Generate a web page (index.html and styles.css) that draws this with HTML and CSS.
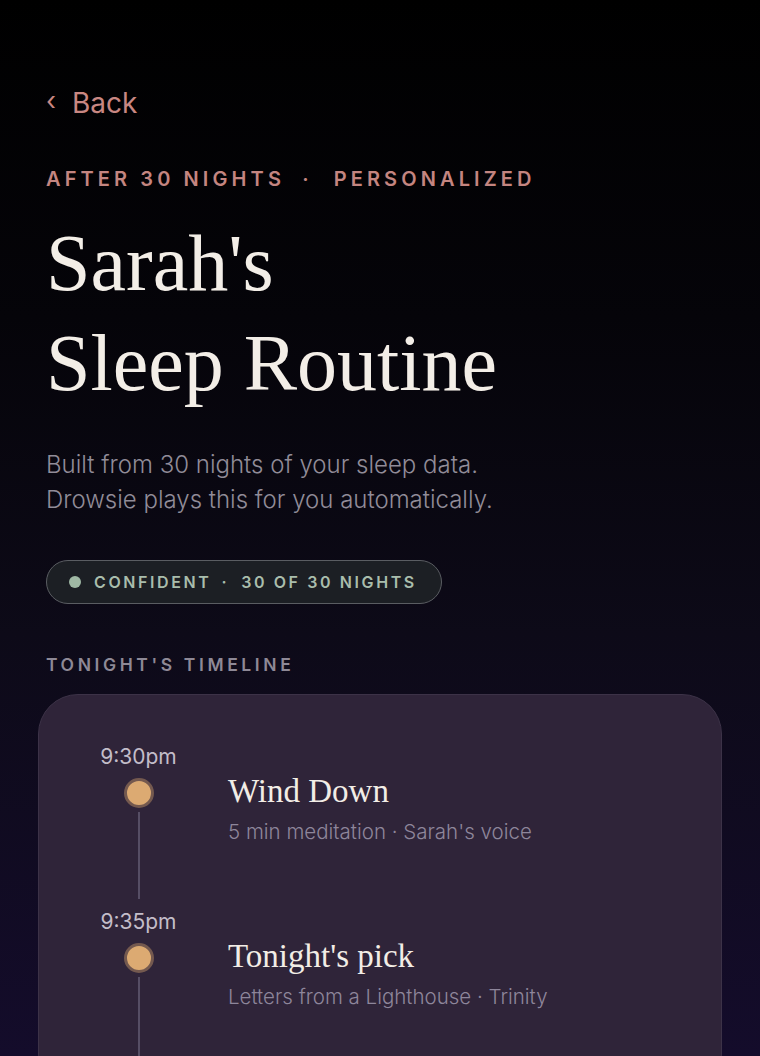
FILE: index.html
```html
<!DOCTYPE html>
<html lang="en">
<head>
<meta charset="utf-8">
<title>Sarah's Sleep Routine</title>
<link rel="stylesheet" href="styles.css">
</head>
<body>
<main class="screen">
  <a class="back" href="#"><span class="chev">‹</span>Back</a>
  <p class="eyebrow">After 30 nights <span class="sep">·</span> Personalized</p>
  <h1 class="title">Sarah's<br>Sleep Routine</h1>
  <p class="lead">Built from 30 nights of your sleep data.<br>Drowsie plays this for you automatically.</p>
  <div class="pill"><span class="pill-dot"></span>Confident <span class="pill-sep">·</span> 30 of 30 nights</div>
  <h2 class="section">Tonight's timeline</h2>
  <section class="card">
    <div class="item">
      <div class="rail">
        <span class="time">9:30pm</span>
        <span class="node"></span>
        <span class="line"></span>
      </div>
      <div class="body">
        <h3 class="item-title">Wind Down</h3>
        <p class="item-sub">5 min meditation · Sarah's voice</p>
      </div>
    </div>
    <div class="item">
      <div class="rail">
        <span class="time">9:35pm</span>
        <span class="node"></span>
        <span class="line"></span>
      </div>
      <div class="body">
        <h3 class="item-title">Tonight's pick</h3>
        <p class="item-sub">Letters from a Lighthouse · Trinity</p>
      </div>
    </div>
  </section>
</main>
</body>
</html>
```
FILE: styles.css
```css
html, body {
  margin: 0;
  padding: 0;
  height: 100%;
}
body {
  background: linear-gradient(180deg, #000000 0%, #050409 30%, #0d0a18 60%, #140c2b 100%);
  font-family: Inter, "Noto Sans", sans-serif;
  overflow: hidden;
}
.screen {
  padding: 84px 38px 0 46px;
  height: 1056px;
  box-sizing: border-box;
}
.back {
  display: inline-flex;
  align-items: center;
  gap: 16px;
  color: #c98782;
  font-size: 28px;
  text-decoration: none;
  line-height: 38px;
}
.chev {
  font-size: 26px;
  line-height: 1;
  margin-top: -4px;
}
.eyebrow {
  margin: 44px 0 0;
  color: #c48580;
  font-size: 20px;
  font-weight: 600;
  letter-spacing: 4.1px;
  text-transform: uppercase;
  line-height: 26px;
}
.sep {
  margin: 0 12px 0 8px;
}
.title {
  margin: 21px 0 0;
  font-family: "Liberation Serif", serif;
  font-weight: 400;
  font-size: 80px;
  line-height: 100px;
  color: #f3eee7;
  letter-spacing: 0;
}
.lead {
  margin: 34px 0 0;
  color: #918c98;
  font-size: 24px;
  line-height: 35px;
  font-weight: 300;
}
.pill {
  margin-top: 43px;
  display: inline-flex;
  align-items: center;
  height: 44px;
  box-sizing: border-box;
  padding: 0 24px 0 22px;
  border: 1.5px solid #5a5d62;
  border-radius: 22px;
  background: #1c1f24;
  color: #a9bdac;
  font-size: 16px;
  font-weight: 600;
  letter-spacing: 2.6px;
  text-transform: uppercase;
}
.pill-dot {
  width: 12px;
  height: 12px;
  border-radius: 50%;
  background: #9fb8a4;
  margin-right: 13px;
}
.pill-sep {
  margin: 0 12px 0 10px;
}
.section {
  margin: 49px 0 0;
  color: #8e8996;
  font-size: 17.5px;
  font-weight: 600;
  letter-spacing: 3.6px;
  text-transform: uppercase;
  line-height: 24px;
}
.card {
  margin: 17px 0 0 -8px;
  background: #2f2439;
  border: 1px solid #3c3247;
  border-radius: 40px;
  height: 400px;
  padding: 49px 0 0 0;
  box-sizing: border-box;
}
.item {
  display: flex;
  height: 165px;
}
.rail {
  width: 204px;
  display: flex;
  flex-direction: column;
  align-items: center;
  flex-shrink: 0;
}
.time {
  color: #c3bdc9;
  font-size: 21px;
  line-height: 26px;
  width: 90px;
  text-align: center;
  margin-left: -5px;
}
.node {
  margin-top: 8px;
  width: 24px;
  height: 24px;
  border-radius: 50%;
  background: #dcaa72;
  border: 3px solid #74594f;
  margin-left: -5px;
}
.line {
  flex: 1;
  width: 2px;
  background: #564e65;
  margin-top: 4px;
  margin-bottom: 10px;
  margin-left: -5px;
}
.body {
  padding-top: 27px;
  margin-left: -15px;
}
.item-title {
  margin: 0;
  font-family: "Liberation Serif", serif;
  font-weight: 400;
  font-size: 33px;
  line-height: 40px;
  color: #f2ede6;
}
.item-sub {
  margin: 8px 0 0;
  color: #8e869b;
  font-size: 20.5px;
  font-weight: 300;
  line-height: 26px;
}
```
